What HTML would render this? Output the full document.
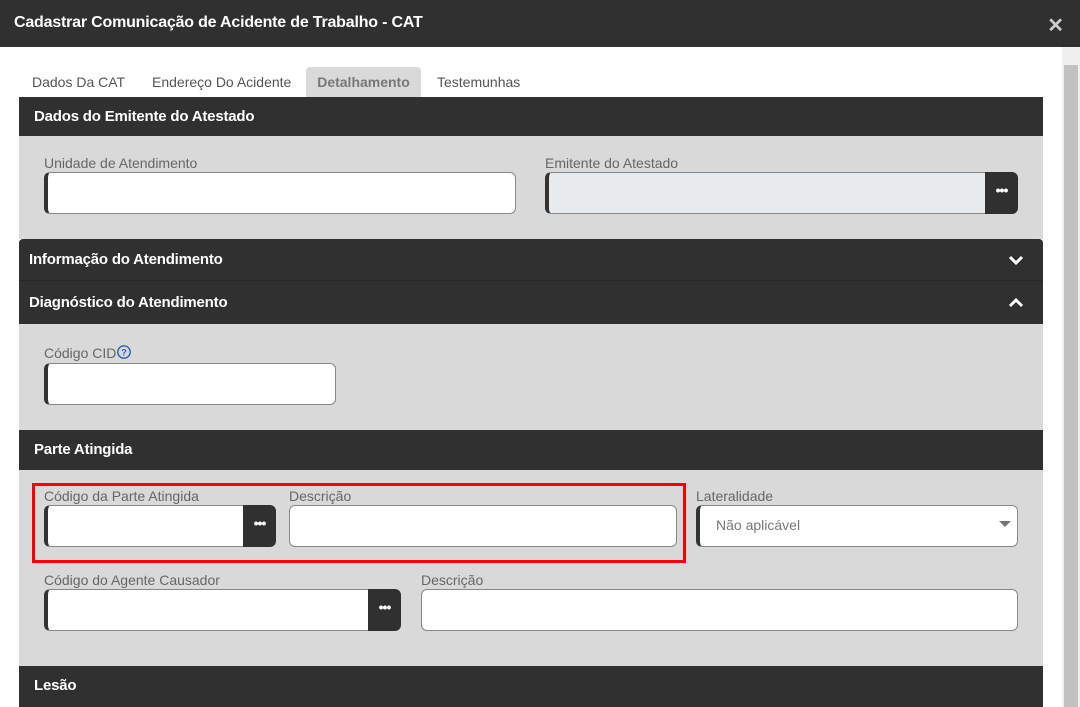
<!DOCTYPE html>
<html><head><meta charset="utf-8"><style>
*{box-sizing:border-box;margin:0;padding:0}
body{width:1080px;height:707px;overflow:hidden;background:#fff;font-family:"Liberation Sans",Arial,sans-serif;position:relative}
.abs{position:absolute}
.hdr{left:0;top:0;width:1080px;height:47px;background:#303030;color:#fff;font-weight:bold;font-size:16px;padding:14px 0 0 14px;letter-spacing:-0.2px}
.x{right:16px;top:13px;color:#ccc;font-size:20px;font-weight:bold}
.tab{top:67px;height:30px;font-size:14px;color:#555;padding-top:7px}
.sec{left:19px;width:1024px;background:#303030;color:#fff;font-weight:bold;font-size:15px;letter-spacing:-0.2px}
.body{left:19px;width:1024px;background:#d9d9d9}
.lbl{font-size:14px;color:#666}
.inp{height:42px;background:#fff;border:1px solid #888;border-left:4px solid #333;border-radius:6px}
.btn{height:42px;background:#303030;border-radius:0 6px 6px 0;color:#fff;font-size:14px;font-weight:bold;text-align:center;line-height:36px;letter-spacing:-1px}
</style></head><body>
<div class="abs hdr">Cadastrar Comunicação de Acidente de Trabalho - CAT</div>
<div class="abs x">✕</div>
<div class="abs" style="left:1062px;top:47px;width:18px;height:660px;background:#f0f0f0"></div>
<div class="abs" style="left:1064px;top:65px;width:14px;height:642px;background:#c1c1c1"></div>
<div class="abs tab" style="left:32px">Dados Da CAT</div>
<div class="abs tab" style="left:152px">Endereço Do Acidente</div>
<div class="abs tab" style="left:306px;width:115px;background:#d9d9d9;border-radius:4px 4px 0 0;text-align:center;color:#777;font-weight:bold">Detalhamento</div>
<div class="abs tab" style="left:437px">Testemunhas</div>

<div class="abs sec" style="top:97px;height:39px;padding:11px 0 0 15px">Dados do Emitente do Atestado</div>
<div class="abs body" style="top:136px;height:103px"></div>
<div class="abs lbl" style="left:44px;top:155px">Unidade de Atendimento</div>
<div class="abs inp" style="left:44px;top:172px;width:472px"></div>
<div class="abs lbl" style="left:545px;top:155px">Emitente do Atestado</div>
<div class="abs inp" style="left:545px;top:172px;width:446px;background:#e7ebee;border-radius:6px 0 0 6px"></div>
<div class="abs btn" style="left:985px;top:172px;width:33px">•••</div>

<div class="abs sec" style="top:239px;height:42px;padding:12px 0 0 10px;border-radius:4px 4px 0 0;border-bottom:1px solid #262626">Informação do Atendimento</div>
<svg class="abs" style="left:1008px;top:254px" width="16" height="12"><path d="M2 3 L8 9 L14 3" stroke="#fff" stroke-width="3" fill="none"/></svg>
<div class="abs sec" style="top:281px;height:43px;padding:13px 0 0 10px">Diagnóstico do Atendimento</div>
<svg class="abs" style="left:1008px;top:296px" width="16" height="12"><path d="M2 10 L8 4 L14 10" stroke="#fff" stroke-width="3" fill="none"/></svg>
<div class="abs body" style="top:324px;height:106px"></div>
<div class="abs lbl" style="left:44px;top:345px">Código CID</div>
<svg class="abs" style="left:116px;top:344px" width="16" height="16"><circle cx="8" cy="8" r="6.2" stroke="#2a5db0" stroke-width="1.4" fill="none"/><text x="8" y="11.5" font-size="9" font-weight="bold" fill="#2a5db0" text-anchor="middle" font-family="Liberation Sans">?</text></svg>
<div class="abs inp" style="left:44px;top:363px;width:292px"></div>

<div class="abs sec" style="top:430px;height:40px;padding:11px 0 0 15px">Parte Atingida</div>
<div class="abs body" style="top:470px;height:196px"></div>
<div class="abs" style="left:32px;top:483px;width:654px;height:80px;border:3px solid #f00"></div>
<div class="abs lbl" style="left:44px;top:488px">Código da Parte Atingida</div>
<div class="abs inp" style="left:44px;top:505px;width:205px;border-radius:6px 0 0 6px"></div>
<div class="abs btn" style="left:243px;top:505px;width:33px">•••</div>
<div class="abs lbl" style="left:289px;top:488px">Descrição</div>
<div class="abs inp" style="left:289px;top:505px;width:388px;border-left:1px solid #888"></div>
<div class="abs lbl" style="left:696px;top:488px">Lateralidade</div>
<div class="abs inp" style="left:696px;top:505px;width:322px;font-size:14px;color:#777;padding:11px 0 0 16px">Não aplicável</div>
<svg class="abs" style="left:999px;top:521px" width="12" height="8"><path d="M0 0 L12 0 L6 6Z" fill="#777"/></svg>
<div class="abs lbl" style="left:44px;top:572px">Código do Agente Causador</div>
<div class="abs inp" style="left:44px;top:589px;width:330px;border-radius:6px 0 0 6px"></div>
<div class="abs btn" style="left:368px;top:589px;width:33px">•••</div>
<div class="abs lbl" style="left:421px;top:572px">Descrição</div>
<div class="abs inp" style="left:421px;top:589px;width:597px;border-left:1px solid #888"></div>

<div class="abs sec" style="top:666px;height:41px;padding:11px 0 0 15px">Lesão</div>
</body></html>
